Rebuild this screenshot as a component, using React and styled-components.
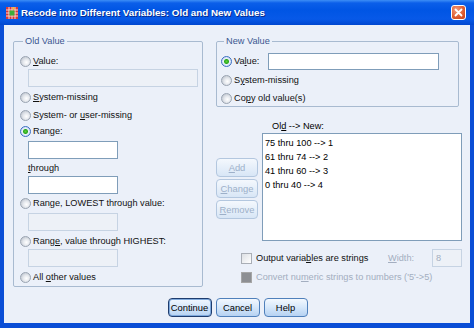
import React from 'react';
import styled, { createGlobalStyle } from 'styled-components';

const GlobalStyle = createGlobalStyle`
  html, body {
    margin: 0;
    padding: 0;
  }
  body {
    font-family: "Liberation Sans", Arial, sans-serif;
    font-size: 9.2px;
    color: #000;
  }
`;

// whole dialog, title bar on top and framed body below
const Window = styled.div`
  width: 474px;
  height: 328px;
  display: flex;
  flex-direction: column;
  overflow: hidden;
  background: #0a4ed6;
`;

const TitleBar = styled.div`
  height: 25px;
  flex: none;
  display: flex;
  align-items: center;
  padding: 0 8px 0 6px;
  background: linear-gradient(#3d8ef6 0px, #0b5fe9 3px, #0055e4 10px, #0759e8 19px, #0047cf 25px);
`;

const Title = styled.h1`
  flex: 1;
  margin: 0 0 0 3px;
  font-size: 9.8px;
  font-weight: bold;
  color: #fff;
  text-shadow: 1px 1px 0 #0a2b8c;
  white-space: nowrap;
  user-select: none;
`;

const CloseButton = styled.div`
  width: 15px;
  height: 15px;
  box-sizing: border-box;
  border: 1px solid #fff;
  border-radius: 3px;
  background: radial-gradient(circle at 35% 30%, #f39a7a, #dc5a2e 60%, #c4401c);
  display: flex;
  align-items: center;
  justify-content: center;
`;

const Body = styled.div`
  flex: 1;
  display: flex;
  flex-direction: column;
  background: #ebf0f9;
  border: solid #0a4ed6;
  border-width: 0 4px 5px 4px;
  padding: 10px 8px 0 9px;
`;

const Main = styled.div`
  display: flex;
  gap: 13px;
`;

const Group = styled.fieldset`
  margin: 0;
  width: ${(p) => p.$width}px;
  box-sizing: border-box;
  border: 1px solid #a8bad0;
  border-radius: 2px;
  padding: ${(p) => p.$pad};
  display: flex;
  flex-direction: column;
`;

const Legend = styled.legend`
  margin-left: 3px;
  padding: 0 2px;
  line-height: 12px;
  color: #3a5690;
`;

const Row = styled.div`
  display: flex;
  align-items: center;
  height: ${(p) => p.$h || 14}px;
  margin-top: ${(p) => p.$top || 0}px;
  margin-left: ${(p) => p.$indent || 0}px;
  color: ${(p) => (p.$muted ? '#a3aec0' : '#111')};
  white-space: nowrap;
`;

const RadioDot = styled.span`
  width: 11px;
  height: 11px;
  flex: none;
  box-sizing: border-box;
  border-radius: 50%;
  margin-right: 2px;
  border: 1px solid ${(p) => (p.$checked ? '#3a6ec2' : '#9aa4b2')};
  background: ${(p) =>
    p.$checked
      ? 'radial-gradient(circle, #5fd03a 0, #2aa81c 2px, #e8f0fb 3px, #c9d8ee 5px)'
      : 'radial-gradient(circle at 60% 60%, #ffffff 0, #e6e9ee 3px, #c3c9d2 6px)'};
`;

const Check = styled.span`
  width: 11px;
  height: 11px;
  flex: none;
  box-sizing: border-box;
  margin-right: 4px;
  border: 1px solid ${(p) => (p.$disabled ? '#a6a6a6' : '#a9aeb6')};
  background: ${(p) =>
    p.$disabled ? '#8d8f93' : 'linear-gradient(135deg, #dcdfe4, #ffffff)'};
`;

const Field = styled.div`
  width: ${(p) => p.$width}px;
  height: ${(p) => p.$h || 18}px;
  flex: none;
  box-sizing: border-box;
  margin-top: ${(p) => p.$top || 0}px;
  margin-left: ${(p) => p.$indent || 0}px;
  border: 1px solid ${(p) => (p.$disabled ? '#c6d3e3' : '#7f9db9')};
  background: ${(p) => (p.$disabled ? '#edf1f7' : '#fff')};
  color: #a3aec0;
  padding: 0 3px;
  display: flex;
  align-items: center;
`;

const Key = styled.span`
  text-decoration: underline;
`;

const Right = styled.div`
  width: 246px;
  display: flex;
  flex-direction: column;
`;

const Recode = styled.div`
  display: grid;
  grid-template-columns: 42px 200px;
  column-gap: 4px;
  margin-top: 13px;
`;

const ListLabel = styled.div`
  grid-column: 2;
  line-height: 12px;
  padding-left: 10px;
  margin-bottom: 1px;
`;

const SideButtons = styled.div`
  grid-column: 1;
  display: flex;
  flex-direction: column;
  gap: 2px;
  padding-top: 25px;
`;

const ListBox = styled.div`
  grid-column: 2;
  height: 108px;
  box-sizing: border-box;
  border: 1px solid #7f9db9;
  background: #fff;
  padding: 2px 2px;
  line-height: 14px;
`;

const Options = styled.div`
  display: flex;
  flex-direction: column;
  padding-left: 25px;
  margin-top: 8px;
`;

const WidthBox = styled.div`
  margin-left: auto;
  display: flex;
  align-items: center;
  color: #a3aec0;
`;

const WidthLabel = styled.span`
  width: 44px;
`;

const Button = styled.div`
  width: ${(p) => p.$width || 42}px;
  height: ${(p) => p.$h || 19}px;
  box-sizing: border-box;
  display: flex;
  align-items: center;
  justify-content: center;
  border-radius: 4px;
  font-size: 9.4px;
  border: 1px solid ${(p) => (p.$disabled ? '#b3c7df' : p.$default ? '#1e3c6e' : '#4f80bb')};
  background: ${(p) =>
    p.$disabled
      ? 'linear-gradient(#f4f8fd, #d8e6f6)'
      : 'linear-gradient(#f3f8fe 0%, #d8e9fb 45%, #b6d2f2 100%)'};
  box-shadow: ${(p) => (p.$default ? 'inset 0 0 0 1px #7fa9dc' : 'none')};
  color: ${(p) => (p.$disabled ? '#9db0c9' : '#000')};
`;

const ButtonBar = styled.div`
  display: flex;
  justify-content: center;
  gap: 4px;
  margin-top: 11px;
`;

function AppIcon() {
  return (
    <svg width="12" height="12" viewBox="0 0 12 12">
      <rect width="12" height="12" fill="#d8373a" />
      {[3, 6, 9].map((v) => (
        <g key={v}>
          <rect x={v - 0.5} y="0" width="1" height="12" fill="#f6d8d0" />
          <rect x="0" y={v - 0.5} width="12" height="1" fill="#f6d8d0" />
        </g>
      ))}
      <rect x="3.5" y="3.5" width="5" height="5" fill="#3cae3a" />
      <rect x="6.5" y="0" width="2" height="2.5" fill="#f0c23a" />
    </svg>
  );
}

function Radio({ checked, children, ...rest }) {
  return (
    <Row {...rest}>
      <RadioDot $checked={checked} />
      <span>{children}</span>
    </Row>
  );
}

export default function App() {
  return (
    <>
      <GlobalStyle />
      <Window>
        <TitleBar>
          <AppIcon />
          <Title>Recode into Different Variables: Old and New Values</Title>
          <CloseButton>
            <svg width="9" height="9" viewBox="0 0 9 9">
              <path d="M1.5 1.5 L7.5 7.5 M7.5 1.5 L1.5 7.5" stroke="#fff" strokeWidth="1.8" strokeLinecap="round" />
            </svg>
          </CloseButton>
        </TitleBar>

        <Body>
          <Main>
            <Group $width={190} $pad="7px 4px 2px 6px">
              <Legend>Old Value</Legend>
              <Radio><Key>V</Key>alue:</Radio>
              <Field $width={170} $indent={8} $top={1} $disabled />
              <Radio $top={3}><Key>S</Key>ystem-missing</Radio>
              <Radio $top={4}>System- or <Key>u</Key>ser-missing</Radio>
              <Radio $top={2} checked>Ran<Key>g</Key>e:</Radio>
              <Field $width={90} $indent={8} $top={3} />
              <Row $top={2} $indent={8}><Key>t</Key>hrough</Row>
              <Field $width={90} $indent={8} $top={1} />
              <Radio $top={2}>Ran<Key>g</Key>e, LOWEST through value:</Radio>
              <Field $width={90} $indent={8} $top={3} $disabled />
              <Radio $top={3}>Rang<Key>e</Key>, value through HIGHEST:</Radio>
              <Field $width={90} $indent={8} $top={1} $disabled />
              <Radio $top={3}>All <Key>o</Key>ther values</Radio>
            </Group>

            <Right>
              <Group $width={243} $pad="5px 4px 1px 4px">
                <Legend>New Value</Legend>
                <Row $h={18}>
                  <RadioDot $checked />
                  <span>Va<Key>l</Key>ue:</span>
                  <Field $width={171} $h={17} $indent={9} />
                </Row>
                <Radio $top={3}>S<Key>y</Key>stem-missing</Radio>
                <Radio $top={4}>Co<Key>p</Key>y old value(s)</Radio>
              </Group>

              <Recode>
                <ListLabel>Ol<Key>d</Key> --&gt; New:</ListLabel>
                <SideButtons>
                  <Button $disabled><Key>A</Key>dd</Button>
                  <Button $disabled><Key>C</Key>hange</Button>
                  <Button $disabled><Key>R</Key>emove</Button>
                </SideButtons>
                <ListBox>
                  <div>75 thru 100 --&gt; 1</div>
                  <div>61 thru 74 --&gt; 2</div>
                  <div>41 thru 60 --&gt; 3</div>
                  <div>0 thru 40 --&gt; 4</div>
                </ListBox>
              </Recode>

              <Options>
                <Row $h={18}>
                  <Check />
                  <span>Output varia<Key>b</Key>les are strings</span>
                  <WidthBox>
                    <WidthLabel><Key>W</Key>idth:</WidthLabel>
                    <Field $width={30} $disabled>8</Field>
                  </WidthBox>
                </Row>
                <Row $top={3} $muted>
                  <Check $disabled />
                  <span>Convert nu<Key>m</Key>eric strings to numbers ('5'-&gt;5)</span>
                </Row>
              </Options>
            </Right>
          </Main>

          <ButtonBar>
            <Button $width={44} $default>Continue</Button>
            <Button $width={44}>Cancel</Button>
            <Button $width={44}>Help</Button>
          </ButtonBar>
        </Body>
      </Window>
    </>
  );
}
